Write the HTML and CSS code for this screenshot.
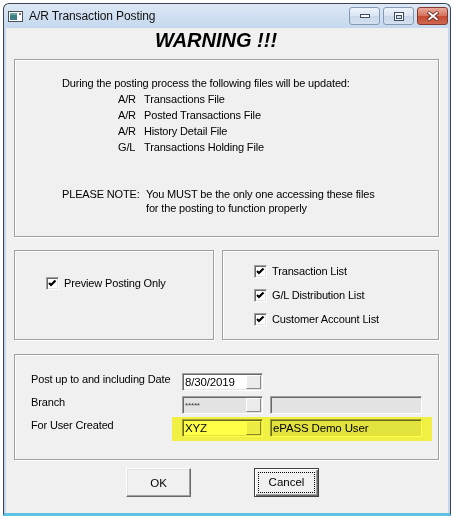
FILE: index.html
```html
<!DOCTYPE html>
<html lang="en">
<head>
  <meta charset="UTF-8" />
  <title>A/R Transaction Posting</title>
  <link rel="stylesheet" href="styles.css">
</head>
<body>
  <div class="window">
    <div class="titlebar">
      <svg class="app-icon" width="15" height="11" viewBox="0 0 15 11">
        <rect x="0.5" y="0.5" width="14" height="10" fill="#fff" stroke="#4a4f57"/>
        <rect x="2" y="2" width="7" height="7" fill="#3e7f86"/>
        <rect x="2" y="2" width="7" height="2" fill="#6aa6a8"/>
        <rect x="11" y="2" width="2" height="2" fill="#6c7680"/>
      </svg>
      <span class="title">A/R Transaction Posting</span>
      <div class="caption">
        <span class="cap">
          <svg width="10" height="5" viewBox="0 0 10 5"><rect x="0.5" y="0.5" width="9" height="3" fill="#fff" stroke="#3c4c63"/></svg>
        </span>
        <span class="cap">
          <svg width="10" height="9" viewBox="0 0 10 9"><rect x="0.5" y="0.5" width="9" height="8" fill="#fff" stroke="#3c4c63"/><rect x="2.5" y="3.5" width="5" height="3" fill="#d5e0ee" stroke="#3c4c63"/></svg>
        </span>
        <span class="cap close">
          <svg width="12" height="10" viewBox="0 0 12 10"><path d="M1 1 L11 9 M11 1 L1 9" stroke="#5a2018" stroke-width="3.6"/><path d="M1.5 1.3 L10.5 8.7 M10.5 1.3 L1.5 8.7" stroke="#fff" stroke-width="2"/></svg>
        </span>
      </div>
    </div>

    <div class="client">
      <h1 class="warning">WARNING !!!</h1>

      <div class="group notice">
        <p class="lead">During the posting process the following files will be updated:</p>
        <div class="files">
          <span>A/R</span><span>Transactions File</span>
          <span>A/R</span><span>Posted Transactions File</span>
          <span>A/R</span><span>History Detail File</span>
          <span>G/L</span><span>Transactions Holding File</span>
        </div>
        <div class="note">
          <span>PLEASE NOTE:</span>
          <span>You MUST be the only one accessing these files<br>for the posting to function properly</span>
        </div>
      </div>

      <div class="options">
        <div class="group preview">
          <label class="check">
            <span class="box"><svg width="11" height="11" viewBox="0 0 11 11"><polyline points="2,5 4,7 8.5,2.5" fill="none" stroke="#000" stroke-width="2.2"/></svg></span>
            Preview Posting Only
          </label>
        </div>
        <div class="group reports">
          <label class="check">
            <span class="box"><svg width="11" height="11" viewBox="0 0 11 11"><polyline points="2,5 4,7 8.5,2.5" fill="none" stroke="#000" stroke-width="2.2"/></svg></span>
            Transaction List
          </label>
          <label class="check">
            <span class="box"><svg width="11" height="11" viewBox="0 0 11 11"><polyline points="2,5 4,7 8.5,2.5" fill="none" stroke="#000" stroke-width="2.2"/></svg></span>
            G/L Distribution List
          </label>
          <label class="check">
            <span class="box"><svg width="11" height="11" viewBox="0 0 11 11"><polyline points="2,5 4,7 8.5,2.5" fill="none" stroke="#000" stroke-width="2.2"/></svg></span>
            Customer Account List
          </label>
        </div>
      </div>

      <div class="group params">
        <span class="label">Post up to and including Date</span>
        <div class="field"><span class="value">8/30/2019</span><span class="drop"></span></div>
        <span></span>

        <span class="label">Branch</span>
        <div class="field off"><span class="value mask">*****</span><span class="drop"></span></div>
        <div class="field off"></div>

        <span class="label">For User Created</span>
        <div class="marked">
          <div class="field"><span class="value">XYZ</span><span class="drop"></span></div>
          <div class="field off"><span class="value">ePASS Demo User</span></div>
        </div>
      </div>

      <div class="actions">
        <button class="btn">OK</button>
        <button class="btn default"><span class="focus">Cancel</span></button>
      </div>
    </div>
  </div>
</body>
</html>
```

FILE: styles.css
```css
* {
  box-sizing: border-box;
}
body {
  margin: 0;
  width: 453px;
  height: 516px;
  overflow: hidden;
  background: #fff;
  font-family: "Liberation Sans", Arial, sans-serif;
  font-size: 11px;
  letter-spacing: -0.15px;
  color: #000;
}
.window {
  display: flex;
  flex-direction: column;
  margin: 3px 0 0 3px;
  width: 448px;
  height: 513px;
  padding: 0 2px;
  border: 1px solid #3b4350;
  border-bottom: 3px solid #5ec3e3;
  border-radius: 6px 6px 0 0;
  background: linear-gradient(#dce8f5, #c5d8ee 24px, #c5d8ee);
}
.titlebar {
  display: flex;
  align-items: center;
  height: 24px;
  padding: 0 0 0 2px;
}
.app-icon {
  margin-right: 6px;
}
.title {
  font-size: 12px;
  letter-spacing: -0.1px;
  color: #111;
}
.caption {
  display: flex;
  gap: 3px;
  margin-left: auto;
}
.cap {
  display: flex;
  align-items: center;
  justify-content: center;
  width: 31px;
  height: 18px;
  border: 1px solid #8699b4;
  border-radius: 3px;
  background: linear-gradient(#eef3fa, #dae5f2 50%, #c8d8eb 51%, #d3e0f0);
}
.close {
  border-color: #85382c;
  background: linear-gradient(#e8ab9c, #d56f5a 50%, #c4482f 51%, #d0674f);
}
.client {
  flex: 1;
  padding: 0 9px 0 8px;
  background: #f0f0f0;
}
.warning {
  margin: 0 0 7px;
  padding-right: 21px;
  font-size: 20px;
  font-style: italic;
  font-weight: bold;
  line-height: 24px;
  letter-spacing: 0;
  text-align: center;
}
.group {
  border: 1px solid #a0a0a0;
  box-shadow: inset 1px 1px 0 #fff, 1px 1px 0 #fff;
}
.notice {
  height: 178px;
  margin-bottom: 13px;
  padding: 15px 0 0 47px;
  line-height: 16px;
}
.lead {
  margin: 0;
}
.files {
  display: grid;
  grid-template-columns: 26px auto;
  justify-content: start;
  margin-left: 56px;
}
.note {
  display: grid;
  grid-template-columns: 84px auto;
  justify-content: start;
  margin-top: 32px;
  line-height: 14px;
}
.options {
  display: flex;
  gap: 8px;
  margin-bottom: 14px;
}
.preview {
  width: 200px;
  height: 90px;
  padding: 26px 0 0 31px;
}
.reports {
  display: flex;
  flex-direction: column;
  gap: 11px;
  width: 217px;
  height: 90px;
  padding: 14px 0 0 31px;
}
.check {
  display: flex;
  align-items: center;
  gap: 5px;
  height: 13px;
  line-height: 13px;
}
.box {
  display: flex;
  width: 13px;
  height: 13px;
  border: 1px solid;
  border-color: #a0a0a0 #fff #fff #a0a0a0;
  box-shadow: inset 1px 1px 0 #696969, inset -1px -1px 0 #e3e3e3;
  background: #fff;
}
.params {
  display: grid;
  grid-template-columns: 144px 81px 152px;
  grid-auto-rows: 18px;
  gap: 5px 7px;
  align-content: start;
  height: 106px;
  margin-bottom: 8px;
  padding: 18px 0 0 16px;
}
.label {
  line-height: 12px;
}
.field {
  display: flex;
  align-items: center;
  padding: 1px 1px 1px 2px;
  border: 1px solid;
  border-color: #a0a0a0 #fff #fff #a0a0a0;
  box-shadow: inset 1px 1px 0 #696969, inset -1px -1px 0 #e3e3e3;
  background: #fff;
  font-size: 11.5px;
}
.off {
  background: #e3e3e3;
}
.value {
  flex: 1;
}
.mask {
  font-size: 8px;
  color: #333;
}
.drop {
  width: 15px;
  height: 100%;
  border: 1px solid;
  border-color: #fff #8a8a8a #8a8a8a #fff;
  background: #ebebeb;
}
.marked {
  position: relative;
  display: grid;
  grid-column: 2 / 4;
  grid-template-columns: 81px 152px;
  column-gap: 7px;
}
.marked::after {
  content: "";
  position: absolute;
  inset: -2px -10px -4px -10px;
  background: #ffff48;
  mix-blend-mode: multiply;
}
.actions {
  display: flex;
  gap: 63px;
  padding-left: 112px;
}
.btn {
  width: 65px;
  height: 29px;
  padding: 0;
  border: 1px solid;
  border-color: #fff #696969 #696969 #fff;
  box-shadow: inset -1px -1px 0 #a0a0a0, inset 1px 1px 0 #e3e3e3;
  background: #f0f0f0;
  font-family: "Liberation Sans", Arial, sans-serif;
  font-size: 11.5px;
  color: #000;
}
.default {
  border-color: #404040;
  box-shadow: inset 1px 1px 0 #fff, inset -1px -1px 0 #696969, inset -2px -2px 0 #a0a0a0;
}
.focus {
  display: block;
  margin: 0 3px;
  border: 1px dotted #000;
  line-height: 19px;
}
```
